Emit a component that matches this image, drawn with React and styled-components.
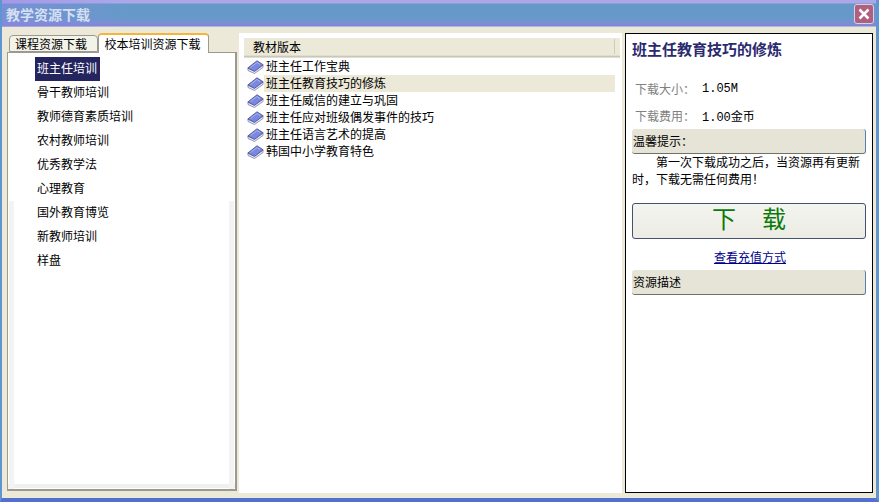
import React from 'react'
import styled, { createGlobalStyle } from 'styled-components'

const GlobalStyle = createGlobalStyle`
    html, body {
        margin: 0;
        padding: 0;
        background: #5b7fd0;
    }
    * {
        box-sizing: border-box;
    }
`
const Window = styled.div`
    width: 879px;
    height: 502px;
    display: flex;
    flex-direction: column;
    overflow: hidden;
    background: #ece9d8;
    font-family: "Noto Sans CJK SC", "Liberation Sans", sans-serif;
    font-size: 12px;
    color: #000;
    border-left: 2px solid #5f96d2;
    border-right: 3px solid #5f96d2;
    border-bottom: 4px solid #5270cf;
`
const TitleBar = styled.div`
    height: 27px;
    margin: 0 -3px 0 -2px;
    flex: none;
    display: flex;
    align-items: center;
    justify-content: space-between;
    padding: 1px 5px 0 6px;
    background:
        linear-gradient(90deg, rgba(150, 130, 230, 0.4), rgba(150, 130, 230, 0) 130px),
        linear-gradient(#aca8e8 0, #aca8e8 3px, #6699c9 4px, #6699c9 18px, #7d8ed6 23px, #7a88d6 26px, #ece9d8 27px);
`
const TitleText = styled.div`
    font-size: 14px;
    font-weight: 700;
    color: #d4e0f2;
`
const CloseButton = styled.div`
    width: 20px;
    height: 20px;
    display: flex;
    align-items: center;
    justify-content: center;
    border: 1px solid #d8d0ea;
    border-radius: 3px;
    background: #b0607c;
`
const Body = styled.div`
    flex: 1;
    min-height: 0;
    display: flex;
    padding: 3px 3px 5px 5px;
`
const LeftColumn = styled.div`
    width: 230px;
    flex: none;
    display: flex;
    flex-direction: column;
    padding: 3px 0 2px 0;
`
const TabRow = styled.div`
    height: 19px;
    flex: none;
    display: flex;
    align-items: flex-end;
    padding-left: 2px;
    position: relative;
    z-index: 1;
`
const Tab = styled.div`
    height: ${p => p.$active ? '20px' : '17px'};
    width: ${p => p.$active ? '111px' : '89px'};
    margin-bottom: ${p => p.$active ? '-1px' : '0'};
    padding: ${p => p.$active ? '0 2px 2px 0' : '0 5px 0 0'};
    display: flex;
    align-items: center;
    justify-content: center;
    background: ${p => p.$active ? '#fff' : '#f4f3ea'};
    border: 1px solid #9a9a90;
    border-bottom: ${p => p.$active ? 'none' : '1px solid #9a9a90'};
    border-top: ${p => p.$active ? '2px solid #f5b43c' : '1px solid #9a9a90'};
    border-radius: 4px 4px 0 0;
`
const TabPanel = styled.div`
    flex: 1;
    border: 1px solid #9a9a90;
    border-right-width: 2px;
    border-bottom-width: 2px;
    padding: 4px 0 0 27px;
    background:
        linear-gradient(#f3f3f3, #f3f3f3) left 1px top 148px / 5px calc(100% - 148px) no-repeat,
        linear-gradient(#f3f3f3, #f3f3f3) right 1px top 148px / 5px calc(100% - 148px) no-repeat,
        linear-gradient(#f0f0f0, #f0f0f0) left bottom 1px / 100% 4px no-repeat,
        #fff;
`
const CategoryItem = styled.div`
    width: 65px;
    height: 24px;
    display: flex;
    align-items: center;
    padding: 0 0 3px 2px;
    white-space: nowrap;
    background: ${p => p.$selected ? '#24245e' : 'transparent'};
    color: ${p => p.$selected ? '#fff' : '#000'};
`
const CenterPane = styled.div`
    width: 383px;
    flex: none;
    margin: 3px 0 0 2px;
    background: #fff;
    padding: 5px 2px 0 5px;
`
const ListHeader = styled.div`
    height: 20px;
    display: flex;
    align-items: center;
    padding: 0 0 3px 9px;
    background:
        linear-gradient(#cfccbc, #cfccbc) right 5px top 1px / 1px 15px no-repeat,
        linear-gradient(#ece9d8 0, #ece9d8 17px, #bdbbab 19px, #fff 20px);
`
const ResourceRow = styled.div`
    height: 17px;
    display: flex;
    align-items: center;
    padding-left: 3px;
    white-space: nowrap;
`
const ResourceLabel = styled.span`
    flex: 1;
    height: 17px;
    line-height: 16px;
    padding-left: 2px;
    background: ${p => p.$selected ? '#ece9d8' : 'transparent'};
    margin-right: 5px;
`
const DetailPanel = styled.div`
    width: 248px;
    flex: none;
    margin: 3px 0 0 3px;
    background: #fff;
    border: 1px solid #000;
    border-width: 1px 1.5px 1.5px 1.5px;
    padding: 5px 6px 0 6px;
    display: flex;
    flex-direction: column;
`
const DetailTitle = styled.h1`
    margin: 0;
    height: 21px;
    line-height: 19px;
    font-size: 15px;
    font-weight: 700;
    white-space: nowrap;
    color: #2a2a6e;
`
const MetaRow = styled.div`
    height: 27px;
    display: flex;
    align-items: center;
    padding-left: 3px;
    font-family: "Liberation Mono", "Noto Sans CJK SC", monospace;
    &:first-of-type {
        margin-top: 15px;
    }
`
const MetaLabel = styled.span`
    width: 67px;
    color: #808080;
    font-family: "Noto Sans CJK SC", sans-serif;
`
const NoteBar = styled.div`
    height: 25px;
    flex: none;
    display: flex;
    align-items: center;
    padding: 0 0 2px 1px;
    background: #e6e4d6;
    border-right: 1px solid #5a7ea6;
    border-bottom: 1px solid #70706a;
    border-radius: 3px;
    margin-top: ${p => p.$top || 0}px;
`
const NoteText = styled.p`
    margin: -1px 0 0 0;
    line-height: 17px;
    text-indent: 24px;
`
const DownloadButton = styled.button`
    height: 36px;
    margin-top: 16px;
    flex: none;
    background: linear-gradient(#f4f4f0, #ecece4);
    border: 1px solid #44526c;
    border-radius: 3px;
    color: #0a7a0a;
    font-family: "Noto Sans CJK SC", sans-serif;
    font-size: 24px;
    line-height: 24px;
    padding: 0 0 6px 0;
    letter-spacing: 26px;
    text-indent: 26px;
`
const RechargeLink = styled.a`
    margin-top: 10px;
    height: 16px;
    line-height: 15px;
    padding-left: 2px;
    text-align: center;
    color: #00008b;
    text-decoration: underline;
    font-size: 12px;
`

const Book = () => (
    <svg width="17" height="14" viewBox="0 0 17 14">
        <path d="M1 8 L1 10.5 L7.5 13.5 L16 7.5 L16 5 L7.5 11 Z" fill="#e8e8f2" stroke="#7c80a4" strokeWidth="0.8" />
        <path d="M0.8 8 L10 0.8 L16.2 4.8 L7.5 11.4 Z" fill="#7a88e2" stroke="#4e5896" strokeWidth="0.9" />
        <path d="M3.5 7.5 L10 2.5 L13 4.5" fill="none" stroke="#aab4f0" strokeWidth="1" />
    </svg>
)

const categories = ['班主任培训', '骨干教师培训', '教师德育素质培训', '农村教师培训', '优秀教学法', '心理教育', '国外教育博览', '新教师培训', '样盘']
const resources = ['班主任工作宝典', '班主任教育技巧的修炼', '班主任威信的建立与巩固', '班主任应对班级偶发事件的技巧', '班主任语言艺术的提高', '韩国中小学教育特色']

const App = () => {
    return (
        <Window>
            <GlobalStyle />
            <TitleBar>
                <TitleText>教学资源下载</TitleText>
                <CloseButton>
                    <svg width="12" height="12" viewBox="0 0 12 12">
                        <path d="M1.5 1.5 L10.5 10.5 M10.5 1.5 L1.5 10.5" stroke="#fff" strokeWidth="2.6" />
                    </svg>
                </CloseButton>
            </TitleBar>
            <Body>
                <LeftColumn>
                    <TabRow>
                        <Tab>课程资源下载</Tab>
                        <Tab $active>校本培训资源下载</Tab>
                    </TabRow>
                    <TabPanel>
                        {categories.map((name, indx) => (
                            <CategoryItem key={indx} $selected={indx === 0}>{name}</CategoryItem>
                        ))}
                    </TabPanel>
                </LeftColumn>
                <CenterPane>
                    <ListHeader>教材版本</ListHeader>
                    {resources.map((name, indx) => (
                        <ResourceRow key={indx}>
                            <Book />
                            <ResourceLabel $selected={indx === 1}>{name}</ResourceLabel>
                        </ResourceRow>
                    ))}
                </CenterPane>
                <DetailPanel>
                    <DetailTitle>班主任教育技巧的修炼</DetailTitle>
                    <MetaRow><MetaLabel>下载大小：</MetaLabel>1.05M</MetaRow>
                    <MetaRow><MetaLabel>下载费用：</MetaLabel>1.00金币</MetaRow>
                    <NoteBar>温馨提示：</NoteBar>
                    <NoteText>第一次下载成功之后，当资源再有更新时，下载无需任何费用！</NoteText>
                    <DownloadButton>下载</DownloadButton>
                    <RechargeLink href="#">查看充值方式</RechargeLink>
                    <NoteBar $top={5}>资源描述</NoteBar>
                </DetailPanel>
            </Body>
        </Window>
    )
}

export default App
